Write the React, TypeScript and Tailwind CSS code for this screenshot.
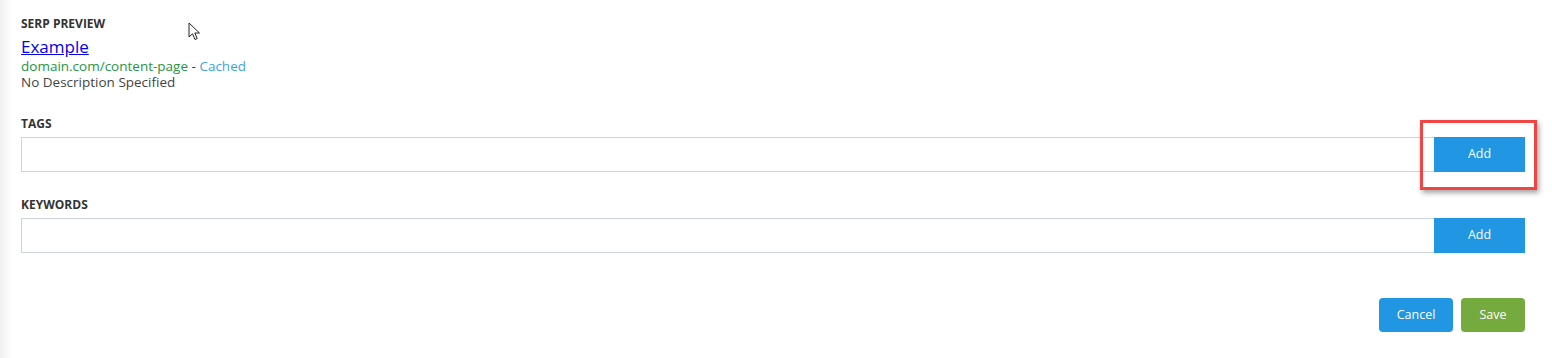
import React from 'react';

function Cursor() {
  return (
    <svg className="absolute left-[188px] top-[22px]" width="14" height="20" viewBox="0 0 14 20" aria-hidden="true">
      <path d="M1 1 L1 15 L4.5 11.8 L7 17.5 L9.2 16.5 L6.8 11 L11.5 11 Z" fill="#fff" stroke="#222" strokeWidth="1" strokeLinejoin="round" />
    </svg>
  );
}

function Field({ label, highlight }: { label: string; highlight?: boolean }) {
  return (
    <div className="mb-[26px]">
      <h3 className="text-[12px] font-bold uppercase text-[#333] leading-[14px] mb-[6px]">{label}</h3>
      <div className="flex h-[35px]">
        <input className="flex-1 h-full border border-[#cdd3da] border-r-0 outline-none px-2 text-[13px]" />
        <div className="relative">
          <button className="w-[91px] h-full bg-[#2196e3] text-white text-[12.5px]">Add</button>
          {highlight && (
            <div className="absolute -left-[14px] -top-[17px] w-[117px] h-[70px] border-[3px] border-[#f04545] shadow-[2px_3px_5px_rgba(0,0,0,0.35)] pointer-events-none" />
          )}
        </div>
      </div>
    </div>
  );
}

export default function App() {
  return (
    <div className="relative w-[1552px] h-[358px] bg-white font-['Open_Sans',sans-serif] overflow-hidden">
      <div className="absolute left-0 top-0 h-full w-[12px] bg-gradient-to-r from-[#f0f0f0] to-white" />
      <Cursor />
      <div className="relative pl-[21px] pr-[27px] pt-[17px]">
        {/* SERP preview */}
        <div className="mb-[27px]">
          <h3 className="text-[12px] font-bold uppercase text-[#333] leading-[14px] mb-[6px]">Serp Preview</h3>
          <a href="#" className="block text-[17px] leading-[20px] text-[#0000ee] underline w-fit">Example</a>
          <div className="text-[13.5px] leading-[16px] mt-[1px]">
            <span className="text-[#27943f]">domain.com/content-page</span>
            <span className="text-[#333]"> - </span>
            <span className="text-[#3ba3dc]">Cached</span>
          </div>
          <p className="text-[13.5px] leading-[16px] text-[#444]">No Description Specified</p>
        </div>

        <Field label="Tags" highlight />
        <Field label="Keywords" />

        <div className="flex justify-end gap-[8px] mt-[45px]">
          <button className="w-[74px] h-[34px] rounded-[4px] bg-[#2196e3] text-white text-[12.5px]">Cancel</button>
          <button className="w-[64px] h-[34px] rounded-[4px] bg-[#74aa3e] text-white text-[12.5px]">Save</button>
        </div>
      </div>
    </div>
  );
}
